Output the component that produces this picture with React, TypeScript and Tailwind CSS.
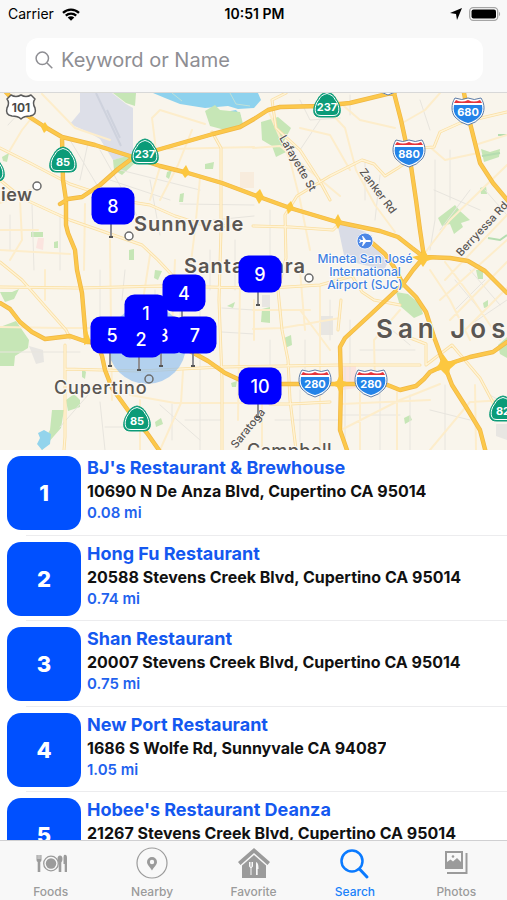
import type { ReactNode } from 'react'

type Place = {
  id: number
  name: string
  address: string
  distance: string
}

const places: Place[] = [
  { id: 1, name: "BJ's Restaurant & Brewhouse", address: '10690 N De Anza Blvd, Cupertino CA 95014', distance: '0.08 mi' },
  { id: 2, name: 'Hong Fu Restaurant', address: '20588 Stevens Creek Blvd, Cupertino CA 95014', distance: '0.74 mi' },
  { id: 3, name: 'Shan Restaurant', address: '20007 Stevens Creek Blvd, Cupertino CA 95014', distance: '0.75 mi' },
  { id: 4, name: 'New Port Restaurant', address: '1686 S Wolfe Rd, Sunnyvale CA 94087', distance: '1.05 mi' },
  { id: 5, name: "Hobee's Restaurant Deanza", address: '21267 Stevens Creek Blvd, Cupertino CA 95014', distance: '1.12 mi' },
]

// Map size in its own units; pins are placed by their centre in the same units.
const MAP_W = 507
const MAP_H = 357

const pins = [
  { id: 8, x: 113, y: 113 },
  { id: 9, x: 260, y: 181 },
  { id: 10, x: 260, y: 293 },
  { id: 4, x: 184, y: 200 },
  { id: 3, x: 163, y: 242 },
  { id: 5, x: 112, y: 242 },
  { id: 7, x: 195, y: 242 },
  { id: 1, x: 146, y: 220 },
  { id: 2, x: 141, y: 246 },
]

const highways = [
  // US 101
  'M4 90 L28 116 L45 127 L62 137 L95 145 L133 157 L160 166 L188 173 L222 183 L254 195 L290 208 L337 222 L380 231 L398 237 L412 248 L424 257 L450 258 L468 261 L485 271 L507 293',
  // 85
  'M62 137 L63 180 L66 200 L66 225 L68 233 L75 250 L77 270 L82 293 L86 340 L98 346 L102 356 L105 370 L112 388 L130 413 L147 433 L161 453',
  // 237
  'M60 204 L68 199 L82 197 L100 185 L118 169 L134 157 L150 152 L213 134 L240 127 L254 119 L268 110 L280 107 L320 106 L350 103 L395 92',
  // 880 / 17
  'M394 93 L401 120 L411 166 L416 200 L420 230 L424 257 L413 270 L403 284 L370 315 L345 338 L340 347 L341 383 L340 430 L348 453',
  // 87
  'M370 241 L385 254 L394 267 L403 284 L416 297 L426 312 L434 337 L444 364 L452 385 L466 407 L480 430 L486 453',
  // 280
  'M0 303 L10 309 L20 322 L32 332 L45 339 L70 336 L87 342 L140 340 L190 351 L208 361 L225 373 L240 380 L258 384 L315 384 L385 384 L400 390 L416 386 L424 379 L430 372 L445 365 L470 357 L493 352 L507 342',
  // 680
  'M464 93 L470 123 L480 163 L493 183 L509 202',
]

const mainRoads = [
  'M0 148 L30 163 L70 184 L118 200 L150 205 L175 216 L200 224 L230 226',
  'M0 180 L22 198 L50 211 L70 220 L96 229 L142 245 L158 260 L172 275 L200 284',
  'M0 262 L22 280 L50 312 L66 330 L70 338',
  'M212 132 L221 148 L221 230 L219 300 L222 380 L222 450',
  'M253 226 L290 227 L333 230 L341 222',
  'M286 93 L272 100 L276 128 L300 150 L318 178 L330 200',
  'M297 196 L330 176 L362 160 L374 164 L385 176 L398 168 L410 160',
  'M420 148 L434 147 L440 132 L460 123 L507 112',
  'M297 196 L285 215 L286 258 L278 290 L282 330 L288 360 L290 400 L296 450',
  'M253 289 L320 285 L352 276 L362 292 L374 300 L400 305',
  'M400 334 L426 344 L426 365 L452 345 L480 378 L496 408',
  'M0 287 L80 288 L160 286 L254 288',
  'M65 369 L140 371 L222 367 L340 365 L420 365',
  'M65 345 L65 437 L64 450',
  'M270 404 L290 404 L330 402',
  'M338 330 L341 300',
]

const softRoads = [
  'M0 230 L38 230', 'M0 203 L30 190', 'M42 94 L75 128 L110 140', 'M10 150 L22 130 L30 120 L50 130', 'M157 158 L152 118 L160 110 L205 124', 'M160 167 L150 200', 'M168 149 L254 147',
  'M192 130 L178 165 L160 200', 'M200 178 L195 230 L190 270', 'M0 327 L60 328 L110 328', 'M110 240 L111 326 L112 400', 'M45 270 L45 300', 'M150 255 L143 300',
  'M130 395 L175 403 L254 403', 'M183 371 L181 403 L160 450', 'M140 400 L140 450', 'M0 250 L70 254', 'M20 200 L22 240 L10 260', 'M85 204 L84 270',
  'M175 260 L172 330', 'M268 110 L290 160 L300 200 L310 250', 'M330 112 L345 128 L356 170 L375 205 L395 232', 'M300 128 L330 135 L350 170', 'M253 148 L280 146 L340 196', 'M330 94 L360 120 L395 128',
  'M430 147 L445 160 L478 153', 'M440 93 L425 110 L404 122', 'M507 135 L475 145', 'M507 165 L450 220 L424 254', 'M445 280 L507 215', 'M440 300 L507 240', 'M450 320 L507 262', 'M460 335 L507 288', 'M430 270 L450 300 L470 340', 'M445 262 L470 295 L500 340',
  'M253 329 L282 328 L340 318', 'M262 384 L262 450', 'M320 285 L320 450', 'M341 404 L430 400', 'M397 392 L397 450', 'M360 385 L360 450', 'M341 430 L400 400 L440 384', 'M375 384 L374 340 L400 310', 'M300 270 L305 330', 'M253 310 L310 310', 'M300 310 L330 350',
  'M507 400 L470 402 L430 450', 'M475 385 L476 450', 'M254 340 L254 300', 'M240 286 L238 420',
]

const streets = [
  'M14 94 L20 112 L8 125', 'M70 140 L115 215', 'M88 143 L80 180', 'M100 150 L145 230', 'M120 170 L200 190', 'M60 215 L60 270', 'M32 205 L34 270', 'M10 215 L10 250', 'M110 180 L170 200', 'M150 180 L160 235', 'M180 204 L254 205', 'M194 222 L254 216',
  'M0 352 L80 352', 'M100 402 L105 450', 'M88 395 L60 427', 'M125 270 L122 300', 'M100 270 L100 320', 'M155 290 L155 320', 'M105 427 L135 427', 'M160 405 L200 440', 'M200 290 L200 450', 'M180 290 L180 320', 'M235 240 L235 290', 'M210 250 L210 290', 'M222 308 L254 310', 'M222 332 L254 334', 'M185 420 L222 420', 'M172 404 L172 440',
  'M270 210 L270 285', 'M300 100 L310 120 L340 118', 'M365 160 L365 200', 'M380 175 L375 220', 'M350 95 L350 115', 'M420 100 L430 130', 'M435 160 L435 220 L430 250', 'M450 150 L450 200', 'M470 190 L440 230', 'M485 190 L507 215', 'M320 120 L300 150', 'M434 190 L480 210',
  'M270 340 L270 380', 'M305 340 L305 380', 'M330 300 L330 340', 'M350 320 L350 380', 'M360 350 L415 350', 'M345 365 L345 440', 'M410 395 L410 450', 'M445 385 L445 450', 'M275 420 L340 420', 'M300 390 L300 450', 'M341 415 L400 415', 'M380 390 L380 450', 'M430 410 L470 420', 'M455 280 L480 310', 'M470 270 L500 305', 'M455 310 L485 280', 'M470 325 L507 300', 'M380 320 L410 345', 'M490 395 L507 405',
]

const parks = [
  'M113 93 L136 93 L135 106 L126 103 Z',
  'M205 111 L215 105 L220 110 L240 112 L243 124 L225 130 L210 126 Z',
  'M113 160 L134 154 L136 162 L122 175 L114 170 Z',
  'M261 122 L278 117 L291 128 L282 145 L286 152 L276 157 L272 146 L262 140 Z',
  'M438 218 L455 205 L460 211 L470 220 L461 223 L463 227 L454 234 L450 224 L442 226 Z',
  'M481 149 L490 152 L500 149 L499 157 L484 162 Z',
  'M480 188 L486 186 L487 194 L481 194 Z',
  'M0 327 L16 321 L29 340 L28 348 L15 356 L14 366 L0 366 Z',
  'M0 292 L12 292 L19 289 L14 299 L5 302 Z',
  'M66 400 L74 394 L80 400 L80 407 L68 411 Z',
  'M52 410 L64 410 L61 428 L54 436 L42 450 L40 446 L50 430 Z',
  'M31 232 L43 232 L43 237 L31 237 Z',
  'M54 242 L58 241 L58 248 L54 248 Z',
  'M129 250 L134 249 L134 260 L129 260 Z',
  'M180 194 L184 193 L183 202 L179 202 Z',
  'M167 172 L172 170 L169 179 L166 177 Z',
  'M205 164 L214 162 L213 169 L205 169 Z',
  'M2 157 L9 153 L7 162 L3 161 Z',
  'M155 270 L162 271 L158 280 L154 278 Z',
  'M227 306 L235 302 L233 308 Z',
  'M262 309 L270 307 L270 323 L261 322 Z',
  'M284 338 L291 335 L292 345 L285 348 Z',
  'M396 292 L408 294 L420 304 L423 314 L414 318 L400 306 Z',
  'M498 345 L507 337 L507 358 L500 354 Z',
  'M483 303 L488 300 L488 307 L484 308 Z',
  'M404 418 L410 415 L412 420 L405 424 Z',
  'M155 422 L161 418 L163 424 L156 427 Z',
  'M476 270 L483 270 L483 279 L478 279 Z',
  'M231 383 L237 381 L236 387 L232 387 Z',
  'M82 368 L86 372 L85 379 L82 377 Z',
]

function StateShield({ x, y, label }: { x: number; y: number; label: string }) {
  return (
    <g transform={`translate(${x} ${y})`}>
      <path d="M0 -14 C5 -13 8 -10 9 -7 C12 -3 14 2 13 7 C12 10 10 11 6 11 H-6 C-10 11 -12 10 -13 7 C-14 2 -12 -3 -9 -7 C-8 -10 -5 -13 0 -14 Z" fill="#0b9b78" stroke="#0b9b78" strokeWidth="1" />
      <path d="M0 -12.500 C4 -11.500 7 -9.500 8 -6.500 C11 -3 12.500 2 11.500 6 C11 8.500 9 9.500 6 9.500 H-6 C-9 9.500 -11 8.500 -11.500 6 C-12.500 2 -11 -3 -8 -6.500 C-7 -9.500 -4 -11.500 0 -12.500 Z" fill="none" stroke="#fff" strokeWidth="1" />
      <text y="5" textAnchor="middle" className="fill-white text-[11px] font-bold">{label}</text>
    </g>
  )
}

function InterstateShield({ x, y, label }: { x: number; y: number; label: string }) {
  return (
    <g transform={`translate(${x} ${y})`}>
      <path d="M-13 -13 Q-6 -10 0 -13 Q6 -10 13 -13 C17 -7 17 1 13 6 Q8 12 0 14 Q-8 12 -13 6 C-17 1 -17 -7 -13 -13 Z" fill="#fff" stroke="#5c7ba6" strokeWidth="1" />
      <path d="M-14 -6 H14 C15 -1 14 3 11 6 Q7 10 0 12 Q-7 10 -11 6 C-14 3 -15 -1 -14 -6 Z" fill="#2383e8" />
      <path d="M-12 -11 Q-6 -8 0 -11 Q6 -8 12 -11 L14 -8 H-14 Z" fill="#e5343b" />
      <text y="5" textAnchor="middle" className="fill-white text-[11px] font-bold">{label}</text>
    </g>
  )
}

function UsShield({ x, y, label }: { x: number; y: number; label: string }) {
  return (
    <g transform={`translate(${x} ${y})`}>
      <path d="M-10 -12 Q-5 -9 0 -12 Q5 -9 10 -12 L14 -8 Q11 -4 14 1 Q16 8 9 9 Q3 9 0 12 Q-3 9 -9 9 Q-16 8 -14 1 Q-11 -4 -14 -8 Z" fill="#fff" stroke="#5b5b5b" strokeWidth="1.5" strokeLinejoin="round" />
      <text y="5" textAnchor="middle" className="fill-[#4a4a4a] text-[12px] font-bold">{label}</text>
    </g>
  )
}

function MapCanvas() {
  return (
    <svg viewBox={`0 93 ${MAP_W} ${MAP_H}`} className="block w-full h-full" role="img" aria-label="Map of the South Bay">
      <rect x="0" y="93" width={MAP_W} height={MAP_H} fill="#f9f5ec" />
      <path d="M80 93 H112 L126 104 L133 108 L133 155 L113 160 L100 139 L88 132 L70 124 L80 112 Z" fill="#dddfe8" />
      <path d="M96 93 L121 146 M107 110 L120 138" stroke="#ced2dd" strokeWidth="2" fill="none" />
      <path d="M337 222 L366 232 L372 244 L388 262 L384 270 L345 260 Z" fill="#d9dce6" />
      <path d="M320 316 H333 V335 H320 Z M262 295 H270 V307 H262 Z M29 346 L43 350 L44 362 L36 364 Z M496 424 H507 V440 L496 436 Z" fill="#e8e6e2" />
      <path d="M38 238 L44 238 L43 250 L36 248 Z M343 365 L356 364 L356 388 L343 390 Z" fill="#fbe4df" />
      <path d="M240 172 H254 V188 H240 Z" fill="#f8ecdd" />
      <path d="M153 93 H258 L261 100 L254 108 L238 109 L228 106 L205 108 L180 104 L165 98 Z" fill="#8ed2ee" />
      <path d="M172 93 L182 101 M230 93 L236 104 L250 106" stroke="#bfe0d8" strokeWidth="1" fill="none" />
      <path d="M225 112 L236 110 L241 116 L232 117 Z" fill="#8ed2ee" />
      {parks.map((d) => <path key={d} d={d} fill="#c6e6b6" />)}
      <path d="M38 433 L44 430 L51 434 L50 444 L42 450 L37 444 L40 438 Z" fill="#93d4ec" />
      <path d="M488 238 L500 240 L507 235 M482 156 L500 153 M498 135 H507" stroke="#b5ddb0" strokeWidth="2" fill="none" />

      <g fill="none" strokeLinejoin="round" strokeLinecap="round">
        <path d={streets.join(' ')} stroke="#e8e5de" strokeWidth="1" />
        <path d={softRoads.join(' ')} stroke="#fdedcb" strokeWidth="2" />
        <path d={mainRoads.join(' ')} stroke="#fadfa3" strokeWidth="3" />
        <path d={mainRoads.join(' ')} stroke="#fff3d6" strokeWidth="1.4" />
        <path d={highways.join(' ')} stroke="#f0b744" strokeWidth="4.4" />
        <path d={highways.join(' ')} stroke="#fcc84b" strokeWidth="3" />
      </g>
      <g fill="#fcc73f">
        <path d="M424 249 L428 256 L436 258 L427 261 L423 267 L419 261 L412 257 L420 255 Z" />
        <path d="M443 354 L448 361 L458 362 L450 369 L448 377 L441 370 L432 372 L439 364 Z" />
        <path d="M340 374 L343 381 L350 383 L343 387 L341 396 L337 387 L330 384 L337 381 Z" />
        <path d="M260 189 L264 197 L259 204 L254 195 Z M338 214 L342 222 L338 229 L334 221 Z M186 165 L190 173 L185 178 L181 172 Z M45 122 L49 128 L44 133 L41 127 Z M291 201 L294 208 L288 214 L286 206 Z" />
        <path d="M86 328 L91 342 L84 345 Z" />
      </g>

      <circle cx="147" cy="345" r="39" fill="#8dbdf0" fillOpacity="0.65" />

      <g fill="#fff" stroke="#6b6b6b" strokeWidth="1.5">
        <circle cx="37" cy="186" r="4" />
        <circle cx="129" cy="236" r="4" />
        <circle cx="309" cy="278" r="4" />
        <circle cx="149" cy="379" r="4" fill="#b7d3ef" />
      </g>

      <g className="fill-[#5a5652] stroke-[#fbf8f2] font-semibold [paint-order:stroke]" strokeWidth="2.5" strokeLinejoin="round">
        <text x="1" y="201" className="text-[18px] tracking-wide">iew</text>
        <text x="134" y="231" className="text-[20px] tracking-wider">Sunnyvale</text>
        <text x="184" y="273" className="text-[20px] tracking-wider">Santa Clara</text>
        <text x="54" y="394" className="text-[18px] font-medium tracking-wider">Cupertino</text>
        <text x="247" y="457" className="text-[18px] font-medium tracking-wide">Campbell</text>
        <text x="376" y="338" className="text-[26px] tracking-[5px]">San José</text>
        <g className="text-[11px] font-medium" strokeWidth="1.5">
          <text transform="translate(279 138) rotate(60)">Lafayette St</text>
          <text transform="translate(359 172) rotate(53)">Zanker Rd</text>
          <text transform="translate(461 257) rotate(-47)">Berryessa Rd</text>
          <text transform="translate(236 449) rotate(-51)">Saratoga</text>
        </g>
      </g>
      <g textAnchor="middle" className="fill-[#3f7fe0] stroke-white text-[12px] font-medium [paint-order:stroke]" strokeWidth="1.5">
        <text x="365" y="263">Mineta San José</text>
        <text x="365" y="276">International</text>
        <text x="365" y="289">Airport (SJC)</text>
      </g>
      <circle cx="365" cy="241" r="8" fill="#4c87e6" stroke="#fff" strokeWidth="0.8" />
      <path d="M371 241 C371 240 370 240 368 240 H366 L363 236 H362 L363 240 H361 L360 239 H359 L360 241 L359 243 H360 L361 242 H363 L362 246 H363 L366 242 H368 C370 242 371 242 371 241 Z" fill="#fff" />

      <UsShield x={21} y={107} label="101" />
      <StateShield x={63} y={161} label="85" />
      <StateShield x={145} y={153} label="237" />
      <StateShield x={327} y={106} label="237" />
      <StateShield x={137} y={420} label="85" />
      <StateShield x={503} y={410} label="82" />
      <StateShield x={-9} y={170} label="82" />
      <InterstateShield x={388} y={81} label="880" />
      <InterstateShield x={468} y={111} label="680" />
      <InterstateShield x={409} y={153} label="880" />
      <InterstateShield x={315} y={383} label="280" />
      <InterstateShield x={371} y={383} label="280" />
    </svg>
  )
}

function MapPin({ id, x, y }: { id: number; x: number; y: number }) {
  return (
    <button
      type="button"
      aria-label={`Result ${id}`}
      className="absolute w-[43px] h-[37px] -translate-x-1/2 -translate-y-1/2 rounded-[10px] bg-[#0000ff] text-white text-lg leading-none font-medium"
      style={{ left: `${(x / MAP_W) * 100}%`, top: `${(y / MAP_H) * 100}%` }}
    >
      {id}
    </button>
  )
}

function PinStem({ x, y }: { x: number; y: number }) {
  return (
    <span
      className="absolute w-[4px] h-8 -translate-x-1/2 border-b-2 border-[#555] flex justify-center"
      style={{ left: `${((x - 2) / MAP_W) * 100}%`, top: `${(y / MAP_H) * 100}%` }}
    >
      <span className="w-[2px] h-full bg-[#8f8f93]" />
    </span>
  )
}

function StatusBar() {
  return (
    <div className="grid grid-cols-3 items-center h-7 pl-2 pr-[6px] text-sm text-black">
      <div className="flex items-center gap-2">
        <span>Carrier</span>
        <svg viewBox="0 0 18 13" className="w-[18px] h-[13px]" aria-hidden="true">
          <g fill="none" stroke="#000" strokeWidth="2.3">
            <path d="M1 4.8 C5.5 0.5 12.500 0.5 17 4.8" />
            <path d="M3.800 7.700 C6.700 4.900 11.300 4.900 14.200 7.700" />
          </g>
          <path d="M9 12.800 L5.700 9.500 C7.500 7.800 10.500 7.800 12.300 9.500 Z" />
        </svg>
      </div>
      <span className="text-center font-semibold">10:51 PM</span>
      <div className="flex items-center justify-end gap-[7px]">
        <svg viewBox="0 0 12 12" className="w-3 h-3" aria-hidden="true">
          <path d="M12 0 L7 12 L6 6 L0 5 Z" />
        </svg>
        <svg viewBox="0 0 32 14" className="w-8 h-[14px]" aria-hidden="true">
          <rect x="0.7" y="0.7" width="28" height="12.600" rx="3.500" fill="#fff" stroke="#a5a5a5" strokeWidth="1.300" />
          <rect x="2.500" y="2.500" width="24.500" height="9" rx="2" />
          <path d="M30 4.800 C31.500 5.500 31.500 8.500 30 9.200 Z" fill="#a5a5a5" />
        </svg>
      </div>
    </div>
  )
}

function SearchBar() {
  return (
    <label className="ml-[26px] mr-6 mt-[10px] mb-[11px] h-[43px] px-[9px] flex items-center gap-2 rounded-xl bg-white">
      <svg viewBox="0 0 18 18" className="w-[18px] h-[18px] shrink-0" fill="none" stroke="#8e8e93" strokeWidth="1.500" aria-hidden="true">
        <circle cx="7.300" cy="7.300" r="6.200" />
        <path d="M12 12 L17.300 17.300" />
      </svg>
      <span className="sr-only">Search places</span>
      <input
        type="text"
        placeholder="Keyword or Name"
        className="flex-1 min-w-0 h-8 bg-transparent text-[20px] leading-8 text-black placeholder:text-[#8e8e93] outline-none"
      />
    </label>
  )
}

function PlaceRow({ place }: { place: Place }) {
  return (
    <li className="group">
      <a href={`#place-${place.id}`} className="flex gap-[6px] h-[85px] group-even:h-[84px] pt-[6px] pl-[7px]">
        <span className="w-[74px] h-[74px] shrink-0 rounded-[14px] bg-[#0050ff] flex items-center justify-center text-white text-[22px] font-extrabold">
          {place.id}
        </span>
        <span className="min-w-0 flex flex-col">
          <span className="text-lg leading-6 font-bold text-[#1458f0] truncate">{place.name}</span>
          <span className="text-base leading-[22px] font-bold text-[#111] truncate">{place.address}</span>
          <span className="text-[15px] leading-[22px] font-semibold text-[#1f62ee]">{place.distance}</span>
        </span>
      </a>
      <div className="ml-[26px] h-px bg-[#ececee]" />
    </li>
  )
}

type TabProps = {
  label: string
  active?: boolean
  children: ReactNode
}

function Tab({ label, active = false, children }: TabProps) {
  return (
    <a
      href={`#${label.toLowerCase()}`}
      aria-current={active ? 'page' : undefined}
      className={`flex-1 flex flex-col items-center pt-[5px] text-xs leading-4 font-medium ${active ? 'text-[#1a82fb]' : 'text-[#9b9b9b]'}`}
    >
      <svg viewBox="0 0 36 34" className="w-9 h-[34px] mb-1" fill="currentColor" aria-hidden="true">
        {children}
      </svg>
      {label}
    </a>
  )
}

function TabBar() {
  return (
    <nav className="flex h-[60px] shrink-0 border-t border-[#d0d0d2] bg-[#f8f8f8]">
      <Tab label="Foods">
        <circle cx="18" cy="17.500" r="7.300" fill="none" stroke="currentColor" strokeWidth="1.300" />
        <circle cx="18" cy="17.500" r="5.200" />
        <path d="M3.500 9 H4.700 V13 H5.400 V9 H6.600 V13 H7.300 V9 H8.500 V14 Q8.500 15.500 7.300 16 V26 H4.700 V16 Q3.500 15.500 3.500 14 Z" />
        <path d="M27 9.500 Q29.500 9.500 29.500 13 Q29.500 15.500 28.300 16.500 V26 H25.700 V16.500 Q24.500 15.500 24.500 13 Q24.500 9.500 27 9.500 Z" />
        <path d="M31 9 Q34 8 34 12 V26 H31.700 V18 H30.500 V11 Z" />
      </Tab>
      <Tab label="Nearby">
        <circle cx="18" cy="17" r="15" fill="none" stroke="currentColor" strokeWidth="1.200" />
        <path fillRule="evenodd" d="M18 11 A5 5 0 0 1 23 16 C23 19 20 21 18 24.500 C16 21 13 19 13 16 A5 5 0 0 1 18 11 Z M18 13.800 A2.200 2.200 0 1 0 18 18.200 A2.200 2.200 0 1 0 18 13.800 Z" />
      </Tab>
      <Tab label="Favorite">
        <path d="M18 2 L34 16 L31.500 19 L18 7 L4.500 19 L2 16 Z" />
        <path d="M18 9 L30 19.500 V32 H6 V19.500 Z" />
        <path d="M13.500 16 V20 Q13.500 21.500 15 21.500 Q16.500 21.500 16.500 20 V16 M15 16 V29" fill="none" stroke="#f8f8f8" strokeWidth="1" />
        <path d="M20 16 Q22.800 17 22.500 23 H21.700 V29 H20 Z" fill="#f8f8f8" />
      </Tab>
      <Tab label="Search" active>
        <g fill="none" stroke="#0a7aff" strokeLinecap="round">
          <circle cx="15" cy="15" r="10.500" strokeWidth="2.500" />
          <path d="M22.500 23 L30 31" strokeWidth="3" />
        </g>
      </Tab>
      <Tab label="Photos">
        <path d="M7 5 H25 V23 H7 Z M9 7 V16 L12.500 13.500 L15 15.500 L19 12 L23 16 V7 Z" fillRule="evenodd" />
        <circle cx="15" cy="10.500" r="1.300" />
        <path d="M27.500 7 H29.500 V28 H9 V26 H27.500 Z" />
      </Tab>
    </nav>
  )
}

export default function App() {
  return (
    <div className="h-screen flex flex-col bg-white font-['Inter','Liberation_Sans',sans-serif] antialiased">
      <header className="shrink-0 bg-[#f8f8f8] border-b border-[#d8d8d8]">
        <StatusBar />
        <SearchBar />
      </header>
      <main className="flex-1 min-h-0 flex flex-col">
        <section className="relative shrink-0 w-full aspect-[507/357] overflow-hidden" aria-label="Results map">
          <MapCanvas />
          {pins.map((pin) => <PinStem key={pin.id} x={pin.x} y={pin.y} />)}
          {pins.map((pin) => <MapPin key={pin.id} {...pin} />)}
        </section>
        <ul className="flex-1 min-h-0 overflow-y-auto [scrollbar-width:none]">
          {places.map((place) => <PlaceRow key={place.id} place={place} />)}
        </ul>
      </main>
      <TabBar />
    </div>
  )
}
